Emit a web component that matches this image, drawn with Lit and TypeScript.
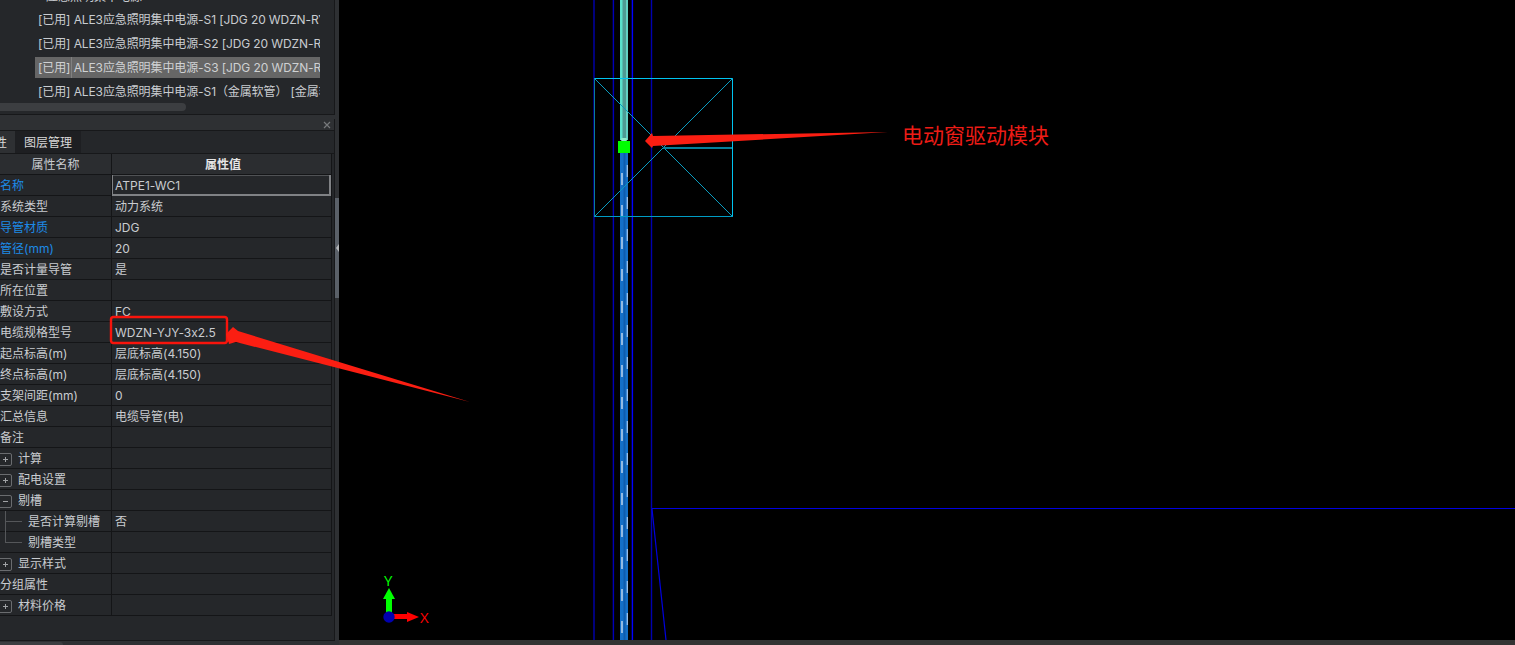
import { LitElement, html, css, svg } from "lit";
import { customElement } from "lit/decorators.js";

const listRows = [
  { text: "[已用] ALE3应急照明集中电源-S1 [JDG 20 WDZN-RYJS-2x2.5]" },
  { text: "[已用] ALE3应急照明集中电源-S2 [JDG 20 WDZN-RYJS-2x2.5]" },
  { text: "[已用] ALE3应急照明集中电源-S3 [JDG 20 WDZN-RYJS-2x2.5]", selected: true },
  { text: "[已用] ALE3应急照明集中电源-S1（金属软管） [金属软管 20]" },
];

type Row = { name: string; value?: string; blue?: boolean; toggle?: string; child?: string; active?: boolean };

const rows: Row[] = [
  { name: "名称", value: "ATPE1-WC1", blue: true, active: true },
  { name: "系统类型", value: "动力系统" },
  { name: "导管材质", value: "JDG", blue: true },
  { name: "管径(mm)", value: "20", blue: true },
  { name: "是否计量导管", value: "是" },
  { name: "所在位置" },
  { name: "敷设方式", value: "FC" },
  { name: "电缆规格型号", value: "WDZN-YJY-3x2.5" },
  { name: "起点标高(m)", value: "层底标高(4.150)" },
  { name: "终点标高(m)", value: "层底标高(4.150)" },
  { name: "支架间距(mm)", value: "0" },
  { name: "汇总信息", value: "电缆导管(电)" },
  { name: "备注" },
  { name: "计算", toggle: "+" },
  { name: "配电设置", toggle: "+" },
  { name: "剔槽", toggle: "-" },
  { name: "是否计算剔槽", value: "否", child: "mid" },
  { name: "剔槽类型", child: "end" },
  { name: "显示样式", toggle: "+" },
  { name: "分组属性" },
  { name: "材料价格", toggle: "+" },
];

@customElement("app-root")
export class AppRoot extends LitElement {
  static styles = css`
    :host {
      display: block;
      width: 1515px;
      height: 645px;
      position: relative;
      overflow: hidden;
      background: #000;
      font-family: "Inter", "Noto Sans CJK SC", sans-serif;
      font-size: 12px;
      font-feature-settings: "calt" 0;
      color: #c9ccd0;
    }
    .page {
      display: flex;
      height: 645px;
    }
    .side {
      width: 339px;
      flex: none;
      display: flex;
      flex-direction: column;
      background: #2e3033;
      overflow: hidden;
    }
    .list-panel {
      height: 115px;
      flex: none;
      background: #25272a;
      border-right: 1px solid #17181a;
      border-bottom: 1px solid #17181a;
      width: 335px;
      box-sizing: border-box;
      position: relative;
      overflow: hidden;
    }
    .list-row {
      height: 21px;
      margin: 0 14px 3px 35px;
      padding-left: 3px;
      line-height: 21px;
      letter-spacing: -0.1px;
      white-space: nowrap;
      overflow: hidden;
    }
    .list-rows {
      margin-top: 2px;
    }
    .list-row.selected {
      background: linear-gradient(#808080, #808080) 36px 0 / 1px 100% no-repeat, #666;
      color: #cfd1d3;
    }
    .cut-row {
      height: 21px;
      margin: -14px 0 0 46px;
      line-height: 21px;
      white-space: nowrap;
    }
    .hscroll {
      position: absolute;
      left: 0;
      top: 103px;
      width: 186px;
      height: 8px;
      border-radius: 0 4px 4px 0;
      background: #3c3e41;
    }
    .prop-panel {
      margin-top: 4px;
      height: 522px;
      flex: none;
      width: 335px;
      box-sizing: border-box;
      background: #25272a;
      border-right: 1px solid #17181a;
      border-bottom: 1px solid #17181a;
      display: flex;
      flex-direction: column;
      overflow: hidden;
    }
    .titlebar {
      height: 11px;
      flex: none;
      background: #2e3033;
      display: flex;
      justify-content: flex-end;
      align-items: center;
      padding-right: 3px;
    }
    .tabs {
      height: 24px;
      flex: none;
      display: flex;
      border-top: 1px solid #17181a;
      border-bottom: 1px solid #17181a;
      box-sizing: border-box;
    }
    .tab {
      line-height: 24px;
      white-space: nowrap;
      overflow: hidden;
      color: #d9d9d9;
    }
    .tab.first {
      width: 15px;
      box-sizing: border-box;
      padding-right: 8px;
      background: #2e3033;
      direction: rtl;
    }
    .tab.second {
      padding: 0 9px;
      background: #1e1f22;
    }
    .table {
      width: 331px;
      flex: none;
      border-right: 1px solid #141517;
      box-sizing: content-box;
    }
    .row {
      display: grid;
      grid-template-columns: 112px 1fr;
      height: 21px;
      box-sizing: border-box;
      border-bottom: 1px solid #141517;
      line-height: 22px;
    }
    .row.head {
      background: #2b2d30;
      text-align: center;
    }
    .head .value {
      font-weight: 700;
      color: #e4e4e4;
    }
    .name {
      border-right: 1px solid #141517;
      white-space: nowrap;
      overflow: hidden;
      position: relative;
    }
    .name.blue {
      color: #1d8ae6;
    }
    .name.toggled {
      padding-left: 18px;
    }
    .name.child {
      padding-left: 28px;
    }
    .value {
      padding-left: 3px;
      white-space: nowrap;
    }
    .row.active .value {
      margin-left: -1px;
      padding-left: 4px;
      height: 21px;
      box-shadow: inset 2px 0 0 0 #808285, inset -2px 0 0 0 #808285, inset 0 -2px 0 0 #808285,
        inset 0 1px 0 0 #505255;
    }
    .box {
      position: absolute;
      left: -2px;
      top: 5px;
      width: 14px;
      height: 13px;
      box-sizing: border-box;
      border: 1px solid #6a6c6f;
      border-radius: 2px;
    }
    .box::before {
      content: "";
      position: absolute;
      left: 4px;
      top: 5px;
      width: 5px;
      height: 1px;
      background: #a0a2a5;
    }
    .box.plus::after {
      content: "";
      position: absolute;
      left: 6px;
      top: 3px;
      width: 1px;
      height: 5px;
      background: #a0a2a5;
    }
    .tree-v {
      position: absolute;
      left: 5px;
      top: 0;
      width: 1px;
      background: #55575a;
    }
    .tree-v.mid {
      height: 21px;
    }
    .tree-v.end {
      height: 10px;
    }
    .tree-h {
      position: absolute;
      left: 5px;
      top: 10px;
      width: 17px;
      height: 1px;
      background: #55575a;
    }
    .vscroll {
      position: absolute;
      left: 335px;
      top: 198px;
      width: 4px;
      height: 100px;
      background: #5a6068;
    }
    .splitter {
      position: absolute;
      left: 336px;
      top: 244px;
      width: 0;
      height: 0;
      border-top: 4px solid transparent;
      border-bottom: 4px solid transparent;
      border-right: 3px solid #b4b6b9;
    }
    .bottom-scroll {
      position: absolute;
      left: 0;
      top: 642px;
      width: 63px;
      height: 3px;
      background: #3c3e41;
      border-radius: 0 3px 0 0;
    }
    .canvas {
      flex: 1;
      position: relative;
      background: #000;
    }
    .canvas svg {
      position: absolute;
      left: 0;
      top: 0;
    }
    .bottom-bar {
      position: absolute;
      left: 0;
      right: 0;
      bottom: 0;
      height: 5px;
      background: #333;
    }
    .axis {
      position: absolute;
      font-family: "Open Sans", sans-serif;
      font-size: 15px;
      line-height: 15px;
    }
    .axis.y {
      left: 45px;
      top: 573px;
      color: #0f0;
    }
    .axis.x {
      left: 81px;
      top: 610px;
      color: #f00;
    }
    .callout {
      position: absolute;
      left: 902px;
      top: 122px;
      font-size: 21px;
      line-height: 28px;
      color: #ed1c16;
      white-space: nowrap;
    }
    .marks {
      position: absolute;
      left: 0;
      top: 0;
      pointer-events: none;
    }
  `;

  private renderRow(r: Row) {
    const nameClass = [
      "name",
      r.blue ? "blue" : "",
      r.toggle ? "toggled" : "",
      r.child ? "child" : "",
    ].join(" ");
    return html`<div class="row ${r.active ? "active" : ""}">
      <div class=${nameClass}>
        ${r.toggle ? html`<span class="box ${r.toggle === "+" ? "plus" : ""}"></span>` : ""}
        ${r.child
          ? html`<span class="tree-v ${r.child}"></span><span class="tree-h"></span>`
          : ""}
        ${r.name}
      </div>
      <div class="value">${r.value ?? ""}</div>
    </div>`;
  }

  private renderDrawing() {
    // canvas coords: page x minus 339
    const c = (x: number) => x - 339;
    const dash = [];
    for (let k = 0; k < 15; k++) {
      const yl = 173 + k * 32;
      const yr = 165 + k * 32;
      dash.push(svg`<line x1=${c(622)} x2=${c(622)} y1=${yl} y2=${yl + 12} stroke="#e4ecf6" stroke-width="1.2"/>`);
      dash.push(svg`<line x1=${c(627.3)} x2=${c(627.3)} y1=${yr} y2=${yr + 12} stroke="#a8c8ee" stroke-width="1.2"/>`);
    }
    return html`<svg width="1176" height="645" viewBox="0 0 1176 645">
      <g fill="none" stroke-width="1.4">
        <line x1=${c(594)} x2=${c(594)} y1="0" y2="645" stroke="#0000b0"/>
        <line x1=${c(613.4)} x2=${c(613.4)} y1="0" y2="645" stroke="#0000b8"/>
        <line x1=${c(632.4)} x2=${c(632.4)} y1="0" y2="645" stroke="#0000ff"/>
        <line x1=${c(651.5)} x2=${c(651.5)} y1="0" y2="645" stroke="#0000b0"/>
      </g>
      <line x1=${c(652)} x2="1176" y1="508.5" y2="508.5" stroke="#0000e0"/>
      <line x1=${c(652)} y1="509" x2=${c(666)} y2="640" stroke="#0000e0" stroke-width="1.2"/>
      <rect x=${c(620)} y="0" width="8" height="140" fill="#4f9a94"/>
      <rect x=${c(620)} y="0" width="2.5" height="140" fill="#58e0cc"/>
      <rect x=${c(626)} y="0" width="2" height="140" fill="#62d0c4"/>
      <rect x=${c(621)} y="138" width="6" height="3" rx="1" fill="#8fe8c8"/>
      <rect x=${c(620)} y="152" width="8" height="488" fill="#1470c8"/>
      <rect x=${c(623.5)} y="152" width="2" height="488" fill="#0e5cae"/>
      ${dash}
      <g fill="none">
        <line x1=${c(594)} y1="78.5" x2=${c(733)} y2="78.5" stroke="#00c4f0"/>
        <line x1=${c(732.5)} y1="78" x2=${c(732.5)} y2="217" stroke="#00c4f0"/>
        <line x1=${c(594)} y1="216.5" x2=${c(733)} y2="216.5" stroke="#009cc4"/>
        <line x1=${c(594.5)} y1="78" x2=${c(594.5)} y2="217" stroke="#0a7f9a"/>
        <line x1=${c(594)} y1="78" x2=${c(733)} y2="217" stroke="#0a9cc0"/>
        <line x1=${c(594)} y1="217" x2=${c(733)} y2="78" stroke="#0a9cc0"/>
        <line x1=${c(663)} y1="148" x2=${c(732)} y2="148" stroke="#057f9a" stroke-width="2"/>
      </g>
      <rect x=${c(618)} y="141" width="12" height="12" fill="#00ff00"/>
      <!-- axis gizmo -->
      <rect x=${c(386)} y="597" width="6" height="16" fill="#00ff00"/>
      <polygon points="${c(389)},588 ${c(383)},599 ${c(395)},599" fill="#00ff00"/>
      <rect x=${c(393)} y="614" width="14" height="5" fill="#ff0000"/>
      <polygon points="${c(419)},617 ${c(407)},612 ${c(407)},622" fill="#ff0000"/>
      <circle cx=${c(389)} cy="617" r="5.7" fill="#0000b0"/>
    </svg>`;
  }

  render() {
    return html`
      <div class="page">
        <div class="side">
          <div class="list-panel">
            <div class="cut-row">应急照明集中电源</div>
            <div class="list-rows">
              ${listRows.map(
                (r) => html`<div class="list-row ${r.selected ? "selected" : ""}">${r.text}</div>`
              )}
            </div>
            <div class="hscroll"></div>
          </div>
          <div class="prop-panel">
            <div class="titlebar">
              <svg width="8" height="8" viewBox="0 0 8 8">
                <path d="M1 1 L7 7 M7 1 L1 7" stroke="#77797c" stroke-width="1.2" fill="none" />
              </svg>
            </div>
            <div class="tabs">
              <div class="tab first">属性</div>
              <div class="tab second">图层管理</div>
            </div>
            <div class="table">
              <div class="row head">
                <div class="name">属性名称</div>
                <div class="value">属性值</div>
              </div>
              ${rows.map((r) => this.renderRow(r))}
            </div>
          </div>
        </div>
        <div class="canvas">
          ${this.renderDrawing()}
          <div class="axis y">Y</div>
          <div class="axis x">X</div>
          <div class="bottom-bar"></div>
        </div>
      </div>
      <div class="vscroll"></div>
      <div class="splitter"></div>
      <div class="bottom-scroll"></div>
      <div class="callout">电动窗驱动模块</div>
      <svg class="marks" width="1515" height="645" viewBox="0 0 1515 645">
        <rect x="111" y="317" width="116" height="26" rx="2.5" fill="none" stroke="#f8140c" stroke-width="2.4" />
        <polygon points="226,334 233,327 238,331 470,402 236,342 229,344" fill="#fb1e12" />
        <polygon points="645,141 652,133 653,136 888,132 653,146 652,148" fill="#fb1e12" />
      </svg>
    `;
  }
}
